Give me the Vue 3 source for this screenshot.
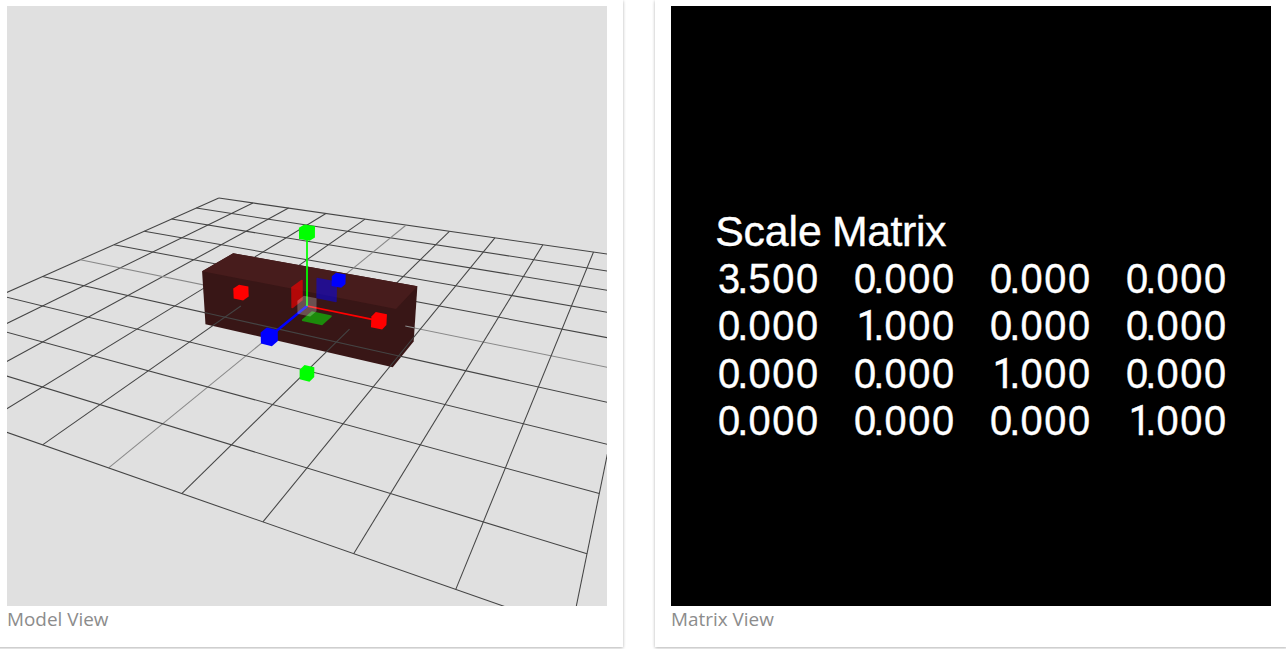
<script setup>
// Camera: position (5, 5, 10), looking at the origin, 45 degree field of view
const SIZE = 600
const CAM = [5, 5, 10]
const DIST = Math.hypot(...CAM)
const FOCAL = SIZE / 2 / Math.tan(Math.PI / 8)
const H = Math.hypot(CAM[0], CAM[2])
const right = [CAM[2] / H, 0, -CAM[0] / H]
const back = CAM.map((n) => n / DIST)
const up = [
  back[1] * right[2] - back[2] * right[1],
  back[2] * right[0] - back[0] * right[2],
  back[0] * right[1] - back[1] * right[0],
]
const dot = (a, b) => a[0] * b[0] + a[1] * b[1] + a[2] * b[2]

function project(p) {
  const depth = DIST - dot(p, back)
  return [SIZE / 2 + (FOCAL * dot(p, right)) / depth, SIZE / 2 - (FOCAL * dot(p, up)) / depth]
}
const toPoints = (list) => list.map((q) => q.map((n) => n.toFixed(2)).join(',')).join(' ')
const face = (...corners) => toPoints(corners.map(project))

function hull(points) {
  const pts = [...points].sort((a, b) => a[0] - b[0] || a[1] - b[1])
  const cross = (o, a, b) => (a[0] - o[0]) * (b[1] - o[1]) - (a[1] - o[1]) * (b[0] - o[0])
  const half = (list) => {
    const out = []
    for (const p of list) {
      while (out.length > 1 && cross(out[out.length - 2], out[out.length - 1], p) <= 0) out.pop()
      out.push(p)
    }
    out.pop()
    return out
  }
  return [...half(pts), ...half(pts.reverse())]
}
function box(center, size) {
  const corners = []
  for (const i of [-0.5, 0.5])
    for (const j of [-0.5, 0.5])
      for (const k of [-0.5, 0.5])
        corners.push(project([center[0] + i * size[0], center[1] + j * size[1], center[2] + k * size[2]]))
  return toPoints(hull(corners))
}

function line(a, b, axis) {
  const [x1, y1] = project(a)
  const [x2, y2] = project(b)
  return { x1, y1, x2, y2, cls: axis ? 'grid axis' : 'grid' }
}
const floor = []
const front = []
for (let i = -5; i <= 5; i++) {
  floor.push(line([-5, 0, i], [5, 0, i], i === 0))
  floor.push(line([i, 0, -5], [i, 0, 5], i === 0))
  front.push(line([i > 0.5 ? -5 : 1.75, 0, i], [5, 0, i], i === 0))
  front.push(line([i, 0, i > 1.75 ? -5 : 0.5], [i, 0, 5], i === 0))
}

const X = 1.75
const Y = 0.5
const outline = box([0, 0, 0], [2 * X, 2 * Y, 2 * Y])
const topFace = face([-X, Y, -Y], [X, Y, -Y], [X, Y, Y], [-X, Y, Y])

// Scale gizmo
const G = (DIST * 1.9 * Math.tan(Math.PI / 8)) / 4
const scaled = (v) => v.map((n) => n * G)
const gizmo = (cls, center, size) => ({ cls, points: box(scaled(center), scaled(size)) })
const cube = [0.08, 0.08, 0.08]
const planes = [
  gizmo('blue sheer', [0.15, 0.15, 0], [0.15, 0.15, 0.01]),
  gizmo('red sheer strong', [0, 0.15, 0.15], [0.01, 0.15, 0.15]),
  gizmo('green sheer', [0.15, 0, 0.15], [0.15, 0.01, 0.15]),
]
const center = gizmo('white', [0, 0, 0], [0.1, 0.1, 0.1])
const handles = [
  gizmo('red', [0.25, 0, 0], [0.5, 0.009, 0.009]),
  gizmo('blue', [0, 0, 0.25], [0.012, 0.012, 0.5]),
  gizmo('green', [0, 0.25, 0], [0.009, 0.5, 0.009]),
  gizmo('red', [0.54, 0, 0], cube),
  gizmo('red', [-0.54, 0, 0], cube),
  gizmo('green', [0, 0.54, 0], cube),
  gizmo('green', [0, -0.54, 0], cube),
  gizmo('blue', [0, 0, 0.54], cube),
  gizmo('blue', [0, 0, -0.54], cube),
]

const matrix = [
  ['3.500', '0.000', '0.000', '0.000'],
  ['0.000', '1.000', '0.000', '0.000'],
  ['0.000', '0.000', '1.000', '0.000'],
  ['0.000', '0.000', '0.000', '1.000'],
]
// Glyph positions inside one matrix cell; the digits are condensed horizontally
const CONDENSE = 0.93
const advance = (value, col) =>
  [value[0] === '1' ? 49.8 : 46.9, 66.3, 77.5, 101.3, 125.1]
    .map((n) => ((n + col * 136) / CONDENSE).toFixed(2))
    .join(' ')
</script>

<template>
  <main class="page">
    <figure class="card">
      <svg class="view model" viewBox="0 0 600 600">
        <clipPath id="box-outline"><polygon :points="outline" /></clipPath>
        <line v-for="(l, i) in floor" :key="'f' + i" :class="l.cls" :x1="l.x1" :y1="l.y1" :x2="l.x2" :y2="l.y2" />
        <polygon class="sides" :points="outline" />
        <polygon class="top" :points="topFace" />
        <g clip-path="url(#box-outline)">
          <line v-for="(l, i) in front" :key="'n' + i" :class="l.cls" :x1="l.x1" :y1="l.y1" :x2="l.x2" :y2="l.y2" />
        </g>
        <polygon v-for="(p, i) in planes" :key="'p' + i" :class="p.cls" :points="p.points" />
        <polygon v-for="(h, i) in handles" :key="'h' + i" :class="h.cls" :points="h.points" />
        <polygon :class="center.cls" :points="center.points" />
      </svg>
      <figcaption>Model View</figcaption>
    </figure>
    <figure class="card">
      <svg class="view matrix" viewBox="0 0 600 600">
        <text x="44.2" y="240" textLength="106.5">Scale</text>
        <text x="160.9" y="240" textLength="114.5">Matrix</text>
        <g :transform="`scale(${CONDENSE} 1)`">
          <template v-for="(row, r) in matrix" :key="r">
            <text
              v-for="(value, c) in row"
              :key="c"
              :x="advance(value, c)"
              :y="287.4 + r * 47.1"
            ><tspan v-if="value[0] === '1'" class="one">1</tspan><template v-else>{{ value[0] }}</template>{{ value.slice(1) }}</text>
          </template>
        </g>
      </svg>
      <figcaption>Matrix View</figcaption>
    </figure>
  </main>
</template>

<style>
body {
  margin: 0;
  overflow: hidden;
  background: #fff;
}
</style>

<style scoped>
.page {
  display: flex;
  gap: 32px;
  margin-left: -9px;
  height: 649px;
  overflow: hidden;
}
.card {
  flex: none;
  box-sizing: border-box;
  width: 632px;
  height: 647px;
  margin: 0;
  padding: 6px 16px 0;
  background: #fff;
  box-shadow: 0 1px 3px rgba(0, 0, 0, 0.3);
}
.view {
  display: block;
  width: 600px;
  height: 600px;
}
.model {
  background: #e0e0e0;
}
.matrix {
  background: #000;
}
figcaption {
  font: 18.9px/27px "Open Sans", "Noto Sans", sans-serif;
  color: #8c8c8c;
}
.grid {
  stroke: #444;
  stroke-width: 1.05;
}
.axis {
  stroke: #888;
}
.top {
  fill: #471c1c;
}
.sides {
  fill: #381616;
}
.red {
  fill: #f00;
}
.green {
  fill: #0f0;
}
.blue {
  fill: #00f;
}
.white {
  fill: #fff;
  opacity: 0.25;
}
.sheer {
  opacity: 0.5;
}
.strong {
  opacity: 0.62;
}
text {
  font-family: "Liberation Sans", Arial, sans-serif;
  font-size: 42.8px;
  fill: #fff;
  stroke: #fff;
  stroke-width: 0.4px;
}
.one {
  font-family: Roboto, sans-serif;
  font-size: 42px;
}
</style>
